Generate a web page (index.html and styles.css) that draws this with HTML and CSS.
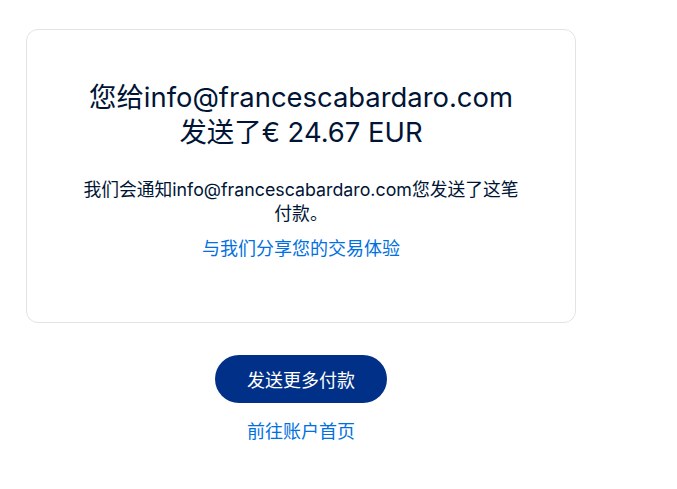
FILE: index.html
```html
<!DOCTYPE html>
<html lang="zh-CN">
<head>
<meta charset="utf-8">
<link rel="stylesheet" href="styles.css">
</head>
<body>
<main class="page">
  <section class="card">
    <h1 class="title">您给info@francescabardaro.com<br>发送了€ 24.67 EUR</h1>
    <p class="note">我们会通知info@francescabardaro.com您发送了这笔付款。</p>
    <a class="link share" href="#">与我们分享您的交易体验</a>
  </section>
  <div class="actions">
    <a class="btn" href="#">发送更多付款</a>
    <a class="link" href="#">前往账户首页</a>
  </div>
</main>
</body>
</html>
```
FILE: styles.css
```css
* { box-sizing: border-box; }
html, body { margin: 0; background: #fff; }
body {
  font-family: Inter, "Noto Sans CJK SC", sans-serif;
  color: #001435;
}
.page {
  width: 550px;
  margin-left: 26px;
  padding-top: 29px;
}
.card {
  border: 1px solid #e3e3e3;
  border-radius: 12px;
  padding: 50px 50px 61px;
  display: flex;
  flex-direction: column;
  align-items: center;
  text-align: center;
}
.title {
  margin: 0;
  font-size: 27.4px;
  font-weight: 400;
  line-height: 35px;
}
.note {
  margin: 28px 0 0;
  font-size: 17.8px;
  line-height: 24px;
  max-width: 445px;
}
.link {
  color: #0070e0;
  text-decoration: none;
  font-size: 18px;
  line-height: 24px;
}
.share { margin-top: 11px; }
.actions {
  margin-top: 32px;
  display: flex;
  flex-direction: column;
  align-items: center;
  gap: 17px;
}
.btn {
  display: flex;
  align-items: center;
  justify-content: center;
  width: 172px;
  height: 48px;
  border-radius: 24px;
  background: #003087;
  color: #fff;
  text-decoration: none;
  font-size: 18px;
}
```
